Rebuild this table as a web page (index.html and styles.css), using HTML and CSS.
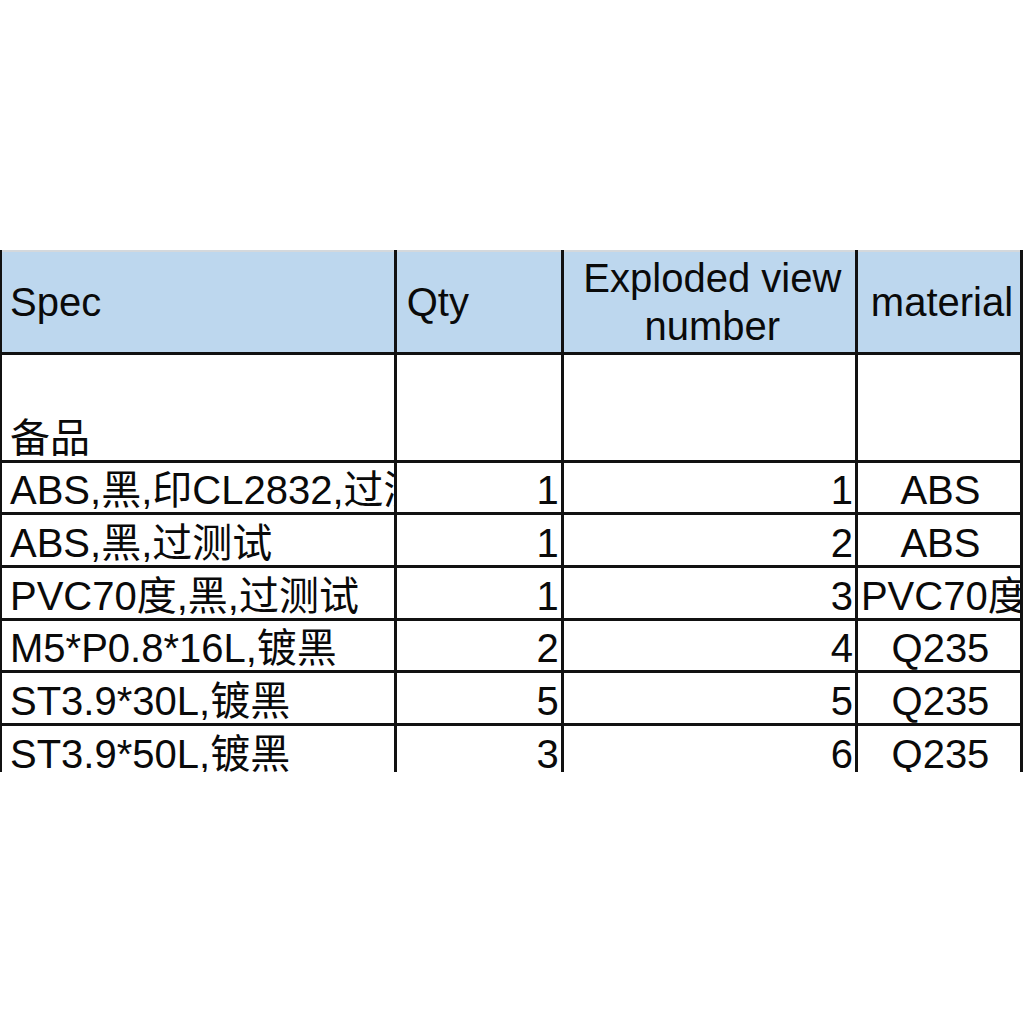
FILE: index.html
```html
<!DOCTYPE html>
<html lang="zh-CN">
<head>
<meta charset="utf-8">
<title>Spec table</title>
<link rel="stylesheet" href="styles.css">
</head>
<body>
<div class="sheet">
  <table class="grid">
    <colgroup>
      <col class="c-spec">
      <col class="c-qty">
      <col class="c-num">
      <col class="c-mat">
    </colgroup>
    <thead>
      <tr class="head">
        <th class="left">Spec</th>
        <th class="left qty-h">Qty</th>
        <th class="center">Exploded view number</th>
        <th class="center">material</th>
      </tr>
    </thead>
    <tbody>
      <tr class="tall">
        <td class="left">备品</td>
        <td></td>
        <td></td>
        <td></td>
      </tr>
      <tr class="r1">
        <td class="left">ABS,黑,印CL2832,过测试</td>
        <td class="right">1</td>
        <td class="right">1</td>
        <td class="center">ABS</td>
      </tr>
      <tr class="r2">
        <td class="left">ABS,黑,过测试</td>
        <td class="right">1</td>
        <td class="right">2</td>
        <td class="center">ABS</td>
      </tr>
      <tr class="r2">
        <td class="left">PVC70度,黑,过测试</td>
        <td class="right">1</td>
        <td class="right">3</td>
        <td class="center"><span class="over">PVC70度</span></td>
      </tr>
      <tr class="r1">
        <td class="left">M5*P0.8*16L,镀黑</td>
        <td class="right">2</td>
        <td class="right">4</td>
        <td class="center">Q235</td>
      </tr>
      <tr class="r2">
        <td class="left">ST3.9*30L,镀黑</td>
        <td class="right">5</td>
        <td class="right">5</td>
        <td class="center">Q235</td>
      </tr>
      <tr class="r2">
        <td class="left">ST3.9*50L,镀黑</td>
        <td class="right">3</td>
        <td class="right">6</td>
        <td class="center">Q235</td>
      </tr>
    </tbody>
  </table>
</div>
</body>
</html>
```
FILE: styles.css
```css
html, body {
  margin: 0;
  padding: 0;
  background: #ffffff;
}

.sheet {
  margin-top: 250px;
  height: 522px;
  width: 1024px;
  overflow: hidden;
}

.grid {
  border-collapse: collapse;
  table-layout: fixed;
  width: 1023px;
  font-family: "Liberation Sans", Arial, "Noto Sans CJK SC", sans-serif;
  font-size: 40px;
  color: #0a0a0a;
  border-top: 2px solid #d4d8dc;
  border-left: 2px solid #222222;
  border-right: 3px solid #222222;
}

.c-spec { width: 394px; }
.c-qty { width: 167px; }
.c-num { width: 294px; }
.c-mat { width: 165px; }

.grid th,
.grid td {
  border-left: 3px solid #111111;
  border-right: 3px solid #111111;
  border-bottom: 3px solid #111111;
  padding: 0 2px 0 8px;
  white-space: nowrap;
  overflow: hidden;
  font-weight: normal;
}

.grid th {
  background: #bdd7ee;
  line-height: 48px;
  vertical-align: middle;
  height: 100px;
  white-space: normal;
}

.grid th.qty-h {
  padding-left: 10px;
}

.grid td {
  line-height: 44px;
  vertical-align: bottom;
}

.head th:first-child,
.grid td:first-child {
  border-left-width: 2px;
}

.tall td { height: 105px; }
.r1 td { height: 49px; }
.r2 td { height: 50px; }

.left { text-align: left; }
.right { text-align: right; }
.center { text-align: center; }

.grid td.center {
  padding: 0 0 0 3px;
  text-overflow: clip;
}

.over {
  display: inline-block;
}
```
